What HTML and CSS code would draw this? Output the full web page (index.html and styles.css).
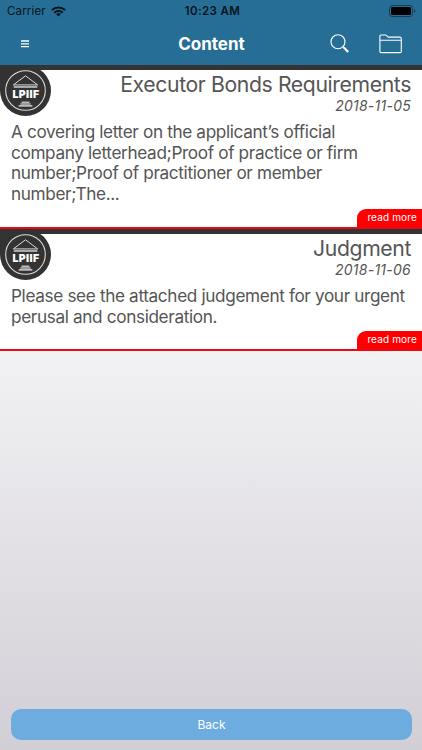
FILE: index.html
```html
<!DOCTYPE html>
<html lang="en">
<head>
  <meta charset="UTF-8">
  <title>Content</title>
  <link rel="stylesheet" href="styles.css">
</head>
<body>

  <!-- Shared logo -->
  <svg class="defs" width="0" height="0">
    <symbol id="lpiif" viewBox="0 0 52 52">
      <path d="M0 0h26v26H0z" fill="#333"/>
      <circle cx="26" cy="26" r="26" fill="#333"/>
      <circle cx="26" cy="26" r="20.2" fill="none" stroke="#ddd" stroke-width="1.1"/>
      <path d="M13.6 20.3 26 11l12.4 9.3z" fill="none" stroke="#ddd" stroke-width="1"/>
      <path d="M14 22.4h24" stroke="#bbb" stroke-width="1.8"/>
      <path d="M22 37.9h8M20.8 39.8h10.4M19 41.7h14" stroke="#bbb" stroke-width="1.6"/>
    </symbol>
  </svg>

  <header class="header">
    <div class="status-bar">
      <div class="carrier">
        <span>Carrier</span>
        <svg width="15" height="11" viewBox="0 0 15 11" fill="none" stroke="#06141c" stroke-width="2">
          <path d="M.9 4.1a9.6 9.6 0 0 1 13.2 0M3.3 6.7a6.1 6.1 0 0 1 8.4 0"/>
          <path d="M5.2 8.2a3.3 3.3 0 0 1 4.6 0L7.5 10.6z" fill="#06141c" stroke="none"/>
        </svg>
      </div>
      <span class="time">10:23 AM</span>
      <svg class="battery" width="27" height="12" viewBox="0 0 27 12">
        <rect x=".5" y=".5" width="23" height="11" rx="2.7" fill="none" stroke="#153e54"/>
        <rect x="2" y="2" width="20" height="8" rx="1.3" fill="#000"/>
        <path d="M25 4v4q1.3-.6 1.3-2T25 4z" fill="#153e54"/>
      </svg>
    </div>

    <nav class="navbar">
      <svg class="menu-icon" width="8" height="8" viewBox="0 0 8 8" stroke="#fff" stroke-width="1.3">
        <path d="M0 1h8M0 3.8h8M0 6.6h8"/>
      </svg>
      <h1>Content</h1>
      <div class="nav-icons">
        <svg width="19" height="20" viewBox="0 0 19 20" fill="none" stroke="#fff">
          <circle cx="8" cy="7.7" r="7" stroke-width="1.1"/>
          <path d="M12.9 12.6l1.6 1.6" stroke-width="1.2"/>
          <path d="M13.8 13.6l4.4 4.5" stroke-width="2.2"/>
        </svg>
        <svg width="23" height="20" viewBox="0 0 23 20" fill="none" stroke="#fff" stroke-width="1.1">
          <path d="M.9 17.5V2.2Q.9 1 2.1 1h4.6Q7.8 1 8.1 2.1t1.4 1h11.1q1.7 0 1.7 1.6v12.8q0 1.1-1.1 1.1H2.1Q.9 18.6.9 17.5zM.9 6.2h21.4"/>
        </svg>
      </div>
    </nav>
  </header>

  <main class="articles">
    <article class="card card-tall">
      <div class="logo">
        <svg><use href="#lpiif"/></svg>
        <span>LPIIF</span>
      </div>
      <h2>Executor Bonds Requirements</h2>
      <time>2018-11-05</time>
      <p>A covering letter on the applicant’s official<br>company letterhead;Proof of practice or firm<br>number;Proof of practitioner or member<br>number;The...</p>
      <a class="read-more" href="#">read more</a>
    </article>

    <article class="card">
      <div class="logo">
        <svg><use href="#lpiif"/></svg>
        <span>LPIIF</span>
      </div>
      <h2>Judgment</h2>
      <time>2018-11-06</time>
      <p>Please see the attached judgement for your urgent<br>perusal and consideration.</p>
      <a class="read-more" href="#">read more</a>
    </article>
  </main>

  <footer class="footer">
    <button class="back">Back</button>
  </footer>

</body>
</html>
```

FILE: styles.css
```css
* {
  box-sizing: border-box;
}

body {
  margin: 0;
  height: 750px;
  display: flex;
  flex-direction: column;
  overflow: hidden;
  font-family: Inter, "Liberation Sans", sans-serif;
  color: #555;
  background: linear-gradient(#fff 0, #f2f2f4 350px, #d2ced6 750px);
}

.defs {
  position: absolute;
}

/* Header */
.header {
  height: 65px;
  background-color: #266e95;
}

.status-bar {
  height: 22px;
  padding: 0 6px 0 7px;
  display: grid;
  grid-template-columns: 1fr auto 1fr;
  align-items: center;
  font-size: 11.5px;
  color: #06141c;
}

.carrier {
  display: flex;
  align-items: center;
  gap: 5px;
  letter-spacing: 0.15px;
}

.time {
  padding-left: 2px;
  font-weight: 600;
  letter-spacing: 0.4px;
}

.battery {
  justify-self: end;
}

.navbar {
  height: 43px;
  padding: 0 20px 0 21px;
  display: grid;
  grid-template-columns: 1fr auto 1fr;
  align-items: center;
}

.navbar h1 {
  margin: 0;
  font-size: 17px;
  line-height: 24px;
  font-weight: 700;
  color: #fff;
}

.nav-icons {
  display: flex;
  justify-content: flex-end;
  align-items: center;
  gap: 30px;
}

/* Articles */
.card {
  position: relative;
  height: 122px;
  padding: 3px 11px 0;
  border-top: 5px solid #333;
  border-bottom: 2px solid #e60a12;
  background-color: #fff;
}

.card-tall {
  height: 164px;
}

.logo {
  position: absolute;
  top: -5px;
  left: 0;
  width: 51px;
  height: 51px;
  display: grid;
  place-items: center;
}

.logo svg,
.logo span {
  grid-area: 1 / 1;
}

.logo svg {
  width: 51px;
  height: 51px;
}

.logo span {
  padding: 9px 0 0 1px;
  font-size: 10.5px;
  line-height: 12px;
  font-weight: 900;
  letter-spacing: 0.4px;
  color: #fff;
}

.card h2 {
  margin: 0;
  font-size: 21.2px;
  line-height: 23px;
  font-weight: 400;
  letter-spacing: -0.38px;
  text-align: right;
}

.card time {
  display: block;
  font-size: 14px;
  line-height: 19px;
  font-style: italic;
  letter-spacing: 0.25px;
  text-align: right;
}

.card p {
  margin: 7px 0 0;
  font-size: 17.2px;
  line-height: 20.6px;
  letter-spacing: -0.36px;
  white-space: nowrap;
}

.read-more {
  position: absolute;
  right: 0;
  bottom: 0;
  width: 65px;
  height: 18px;
  padding-right: 5px;
  border-top-left-radius: 9px;
  background-color: #f00;
  color: #fff;
  font-size: 10px;
  line-height: 17px;
  letter-spacing: 0.15px;
  text-align: right;
  text-decoration: none;
}

/* Footer */
.footer {
  margin-top: auto;
  padding: 0 10px 10px 11px;
}

.back {
  display: block;
  width: 100%;
  height: 31px;
  padding: 0;
  border: 0;
  border-radius: 10px;
  background-color: #6dacdf;
  color: #fff;
  font-family: inherit;
  font-size: 12px;
}
```
